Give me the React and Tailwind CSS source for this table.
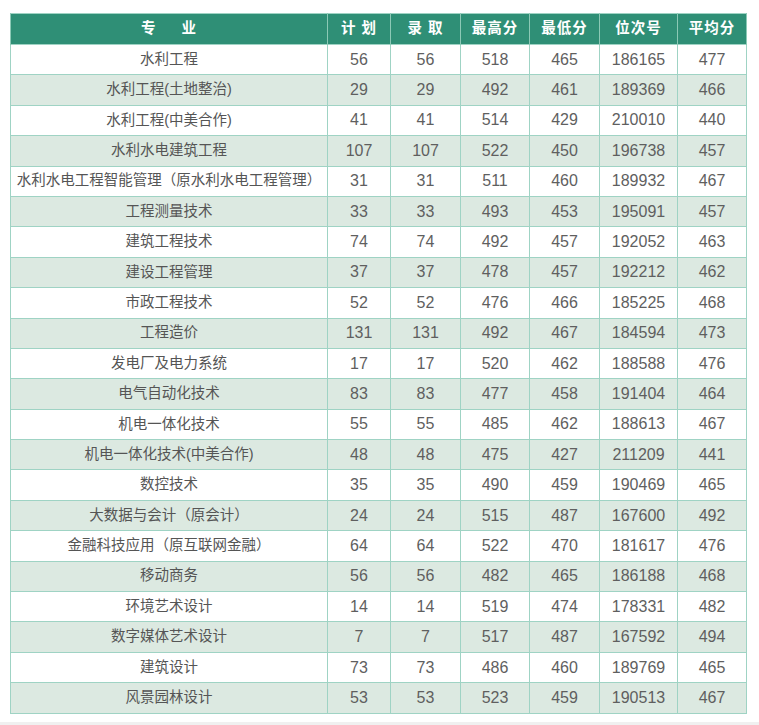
const rows = [
  ["水利工程", 56, 56, 518, 465, 186165, 477],
  ["水利工程(土地整治)", 29, 29, 492, 461, 189369, 466],
  ["水利工程(中美合作)", 41, 41, 514, 429, 210010, 440],
  ["水利水电建筑工程", 107, 107, 522, 450, 196738, 457],
  ["水利水电工程智能管理（原水利水电工程管理）", 31, 31, 511, 460, 189932, 467],
  ["工程测量技术", 33, 33, 493, 453, 195091, 457],
  ["建筑工程技术", 74, 74, 492, 457, 192052, 463],
  ["建设工程管理", 37, 37, 478, 457, 192212, 462],
  ["市政工程技术", 52, 52, 476, 466, 185225, 468],
  ["工程造价", 131, 131, 492, 467, 184594, 473],
  ["发电厂及电力系统", 17, 17, 520, 462, 188588, 476],
  ["电气自动化技术", 83, 83, 477, 458, 191404, 464],
  ["机电一体化技术", 55, 55, 485, 462, 188613, 467],
  ["机电一体化技术(中美合作)", 48, 48, 475, 427, 211209, 441],
  ["数控技术", 35, 35, 490, 459, 190469, 465],
  ["大数据与会计（原会计）", 24, 24, 515, 487, 167600, 492],
  ["金融科技应用（原互联网金融）", 64, 64, 522, 470, 181617, 476],
  ["移动商务", 56, 56, 482, 465, 186188, 468],
  ["环境艺术设计", 14, 14, 519, 474, 178331, 482],
  ["数字媒体艺术设计", 7, 7, 517, 487, 167592, 494],
  ["建筑设计", 73, 73, 486, 460, 189769, 465],
  ["风景园林设计", 53, 53, 523, 459, 190513, 467],
];

const headers = ["专\u00a0\u00a0\u00a0\u00a0\u00a0业", "计 划", "录 取", "最高分", "最低分", "位次号", "平均分"];
const widths = ["w-[317px]", "w-[63px]", "w-[70px]", "w-[69px]", "w-[70px]", "w-[78px]", "w-[69px]"];

export default function App() {
  return (
    <div
      className="w-[759px] h-[725px] bg-white flex flex-col"
      style={{ fontFamily: '"Liberation Sans", "Noto Sans CJK SC", sans-serif' }}
    >
      <div className="pt-[13px] pl-[10px] flex-1">
        <table className="table-fixed border-collapse w-[736px] border border-[#9fd3c4]">
          <colgroup>
            {widths.map((w, i) => (
              <col key={i} className={w} />
            ))}
          </colgroup>
          <thead>
            <tr className="h-[31px] bg-[#2f8f76]">
              {headers.map((h, i) => (
                <th
                  key={i}
                  className="border-x border-[#8cc9b6] text-white text-[14.5px] font-bold text-center p-0 tracking-[1px]"
                >
                  {h}
                </th>
              ))}
            </tr>
          </thead>
          <tbody>
            {rows.map((r, ri) => (
              <tr key={ri} className={`h-[30.4px] ${ri % 2 ? "bg-[#dce9e1]" : "bg-white"}`}>
                {r.map((c, ci) => (
                  <td
                    key={ci}
                    className={`border border-[#9fd3c4] text-center p-0 ${ci === 0 ? "text-[14.5px] text-[#555555]" : "text-[16px] text-[#5f5f5f]"}`}
                  >
                    {c}
                  </td>
                ))}
              </tr>
            ))}
          </tbody>
        </table>
      </div>
      <div className="h-[3px] bg-[#f0f0f0]" />
    </div>
  );
}
